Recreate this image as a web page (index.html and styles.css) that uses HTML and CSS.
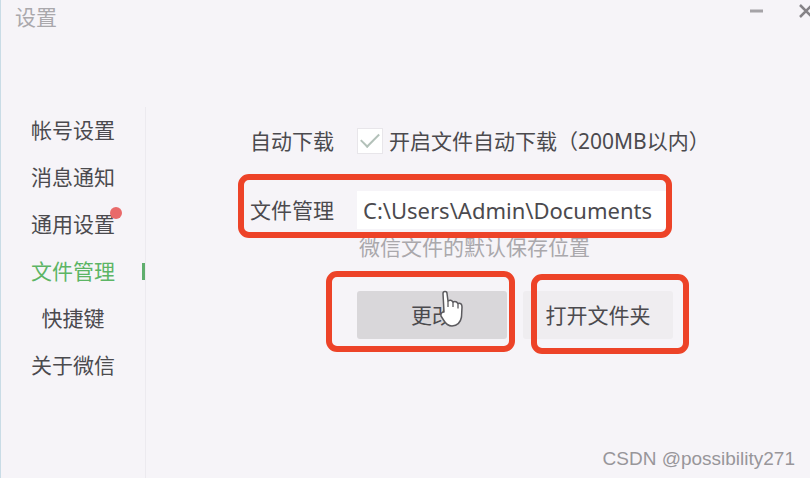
FILE: index.html
```html
<!DOCTYPE html>
<html lang="zh-CN">
<head>
<meta charset="utf-8">
<title>设置</title>
<link rel="stylesheet" href="styles.css">
</head>
<body>
<header class="titlebar">
  <h1 class="title">设置</h1>
  <div class="window-controls">
    <button class="window-button" type="button" aria-label="最小化"><svg width="16" height="16" viewBox="0 0 16 16"><path d="M1 8h13" stroke="#a5a3a7" stroke-width="3"/></svg></button>
    <button class="window-button" type="button" aria-label="关闭"><svg width="16" height="16" viewBox="0 0 16 16"><path d="M1 2l12 12M13 2L1 14" stroke="#858387" stroke-width="2.500"/></svg></button>
  </div>
</header>
<div class="body">
  <nav class="nav">
    <a class="nav-item" href="#account">帐号设置</a>
    <a class="nav-item" href="#notice">消息通知</a>
    <a class="nav-item" href="#general"><span class="nav-label">通用设置<i class="dot"></i></span></a>
    <a class="nav-item active" href="#files" aria-current="page">文件管理</a>
    <a class="nav-item" href="#shortcuts">快捷键</a>
    <a class="nav-item" href="#about">关于微信</a>
  </nav>
  <main class="content">
    <div class="row">
      <span class="row-label">自动下载</span>
      <label class="check"><input class="check-box" type="checkbox" checked><span>开启文件自动下载（200MB以内）</span></label>
    </div>
    <div class="row row-path">
      <label class="row-label" for="path">文件管理</label>
      <input class="path" id="path" type="text" value="C:\Users\Admin\Documents" readonly>
      <i class="mark mark-path"></i>
    </div>
    <p class="hint">微信文件的默认保存位置</p>
    <div class="actions">
      <div class="action">
        <button class="button pressed" type="button">更改</button>
        <svg class="cursor" width="24" height="38" viewBox="0 0 24 38"><path d="M3 3.500Q3 1.500 5 1.500Q7 1.500 7 3.500L8 11Q11 9 13 12Q16 10.500 18 13.500Q22 12.500 22 17L21.500 27Q20 35.500 12 36Q7 36 3.500 30L1 26Q0.500 22 4 22Z" fill="#fff" stroke="#5c5b5f" stroke-width="1.500" stroke-linejoin="round"/><path d="M8 11v6M13 12v5M18 13.500v5" fill="none" stroke="#5c5b5f" stroke-width="1.300"/></svg>
        <i class="mark mark-change"></i>
      </div>
      <div class="action">
        <button class="button" type="button">打开文件夹</button>
        <i class="mark mark-open"></i>
      </div>
    </div>
  </main>
</div>
<div class="watermark">CSDN @possibility271</div>
</body>
</html>
```

FILE: styles.css
```css
* {
  box-sizing: border-box;
}

body {
  margin: 0;
  min-height: 100vh;
  display: flex;
  flex-direction: column;
  position: relative;
  overflow: hidden;
  background: #f6f4f8;
  border-left: 1px solid #c9dce6;
  color: #4b4a4e;
  font: 21px/28px "Noto Sans", "Noto Sans CJK SC", sans-serif;
}

button,
input {
  font: inherit;
  color: inherit;
}

.titlebar {
  display: flex;
  justify-content: space-between;
  align-items: flex-start;
  height: 36px;
  padding-left: 14px;
}

.title {
  margin: 3px 0 0;
  font-size: 21px;
  font-weight: 400;
  color: #aaa8ac;
}

.window-controls {
  display: flex;
  gap: 34px;
  margin: 3px -5px 0 0;
}

.window-button {
  display: block;
  width: 16px;
  height: 16px;
  padding: 0;
  border: 0;
  background: none;
}

.window-button svg {
  display: block;
}

.body {
  flex: 1;
  display: flex;
  padding-top: 71px;
}

.nav {
  flex: none;
  width: 145px;
  display: flex;
  flex-direction: column;
  border-right: 1px solid #eceaef;
}

.nav-item {
  position: relative;
  line-height: 47px;
  text-align: center;
  color: inherit;
  text-decoration: none;
}

.nav-label {
  position: relative;
}

.dot {
  position: absolute;
  top: -3px;
  right: -7px;
  width: 12px;
  height: 12px;
  border-radius: 50%;
  background: #e96a6a;
}

.active {
  color: #5cb565;
}

.active::after {
  content: "";
  position: absolute;
  right: 0;
  top: 15px;
  width: 3px;
  height: 17px;
  background: #5fae6d;
}

.content {
  flex: 1;
  min-width: 0;
  padding: 20px 138px 0 104px;
}

.row {
  display: flex;
  align-items: center;
}

.row-label {
  flex: none;
  width: 107px;
}

.check {
  display: flex;
  align-items: center;
  gap: 6px;
  height: 28px;
  white-space: nowrap;
}

.check-box {
  appearance: none;
  width: 26px;
  height: 26px;
  margin: 0;
  border: 1px solid #e8e6ea;
  background: #fff;
  display: grid;
  place-items: center;
}

.check-box:checked::before {
  content: "";
  width: 16px;
  height: 8px;
  border: solid #b3c1b9;
  border-width: 0 0 2px 2px;
  transform: translateY(-3px) rotate(-45deg);
}

.row-path {
  position: relative;
  margin-top: 36px;
}

.path {
  flex: 1;
  min-width: 0;
  height: 38px;
  padding: 0 6px;
  border: 0;
  background: #fff;
  font-size: 22px;
}

.hint {
  margin: 4px 0 30px 109px;
  color: #aaa8ac;
}

.actions {
  display: flex;
  gap: 16px;
  margin-left: 107px;
}

.action {
  position: relative;
}

.button {
  display: block;
  width: 150px;
  height: 48px;
  padding: 0;
  border: 0;
  border-radius: 3px;
  background: #efedf0;
}

.pressed {
  background: #d9d7da;
}

.cursor {
  position: absolute;
  left: 83px;
  top: -1px;
}

.mark {
  position: absolute;
  border: 6px solid #ed4328;
  border-radius: 11px;
  pointer-events: none;
}

.mark-path {
  inset: -17px 0 -9px -12px;
}

.mark-change {
  inset: -20px -8px -13px -31px;
}

.mark-open {
  inset: -17px -16px -15px 8px;
}

.watermark {
  position: absolute;
  right: 15px;
  bottom: 5px;
  font: 19px/28px "Liberation Sans", sans-serif;
  color: #98969a;
}
```
